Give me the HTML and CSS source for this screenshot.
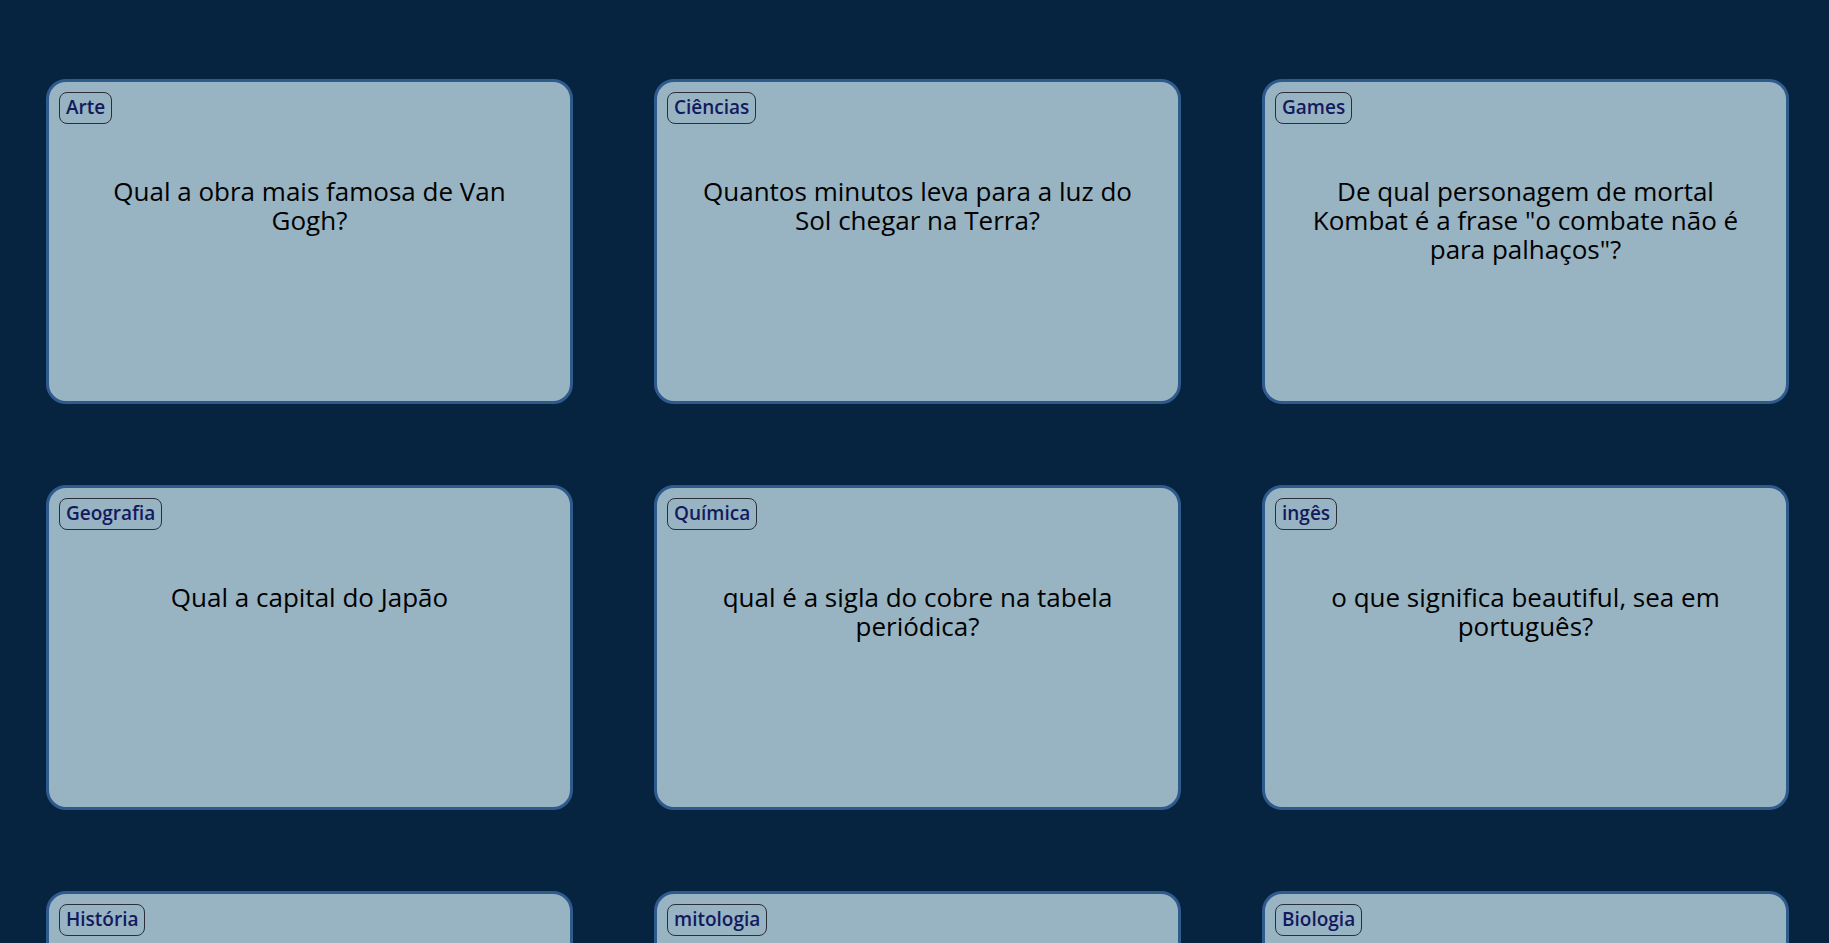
FILE: index.html
```html
<!DOCTYPE html>
<html lang="pt-BR">
<head>
<meta charset="utf-8">
<title>Perguntas</title>
<link rel="stylesheet" href="styles.css">
</head>
<body>
<main class="board">
  <article class="card">
    <span class="tag">Arte</span>
    <p class="question">Qual a obra mais famosa de Van Gogh?</p>
  </article>
  <article class="card">
    <span class="tag">Ciências</span>
    <p class="question">Quantos minutos leva para a luz do Sol chegar na Terra?</p>
  </article>
  <article class="card">
    <span class="tag">Games</span>
    <p class="question">De qual personagem de mortal Kombat é a frase "o combate não é para palhaços"?</p>
  </article>
  <article class="card">
    <span class="tag">Geografia</span>
    <p class="question">Qual a capital do Japão</p>
  </article>
  <article class="card">
    <span class="tag">Química</span>
    <p class="question">qual é a sigla do cobre na tabela periódica?</p>
  </article>
  <article class="card">
    <span class="tag">ingês</span>
    <p class="question">o que significa beautiful, sea em português?</p>
  </article>
  <article class="card">
    <span class="tag">História</span>
    <p class="question">Quem foi o primeiro presidente do Brasil?</p>
  </article>
  <article class="card">
    <span class="tag">mitologia</span>
    <p class="question">Quem é o deus do trovão na mitologia nórdica?</p>
  </article>
  <article class="card">
    <span class="tag">Biologia</span>
    <p class="question">Qual é a maior célula do corpo humano?</p>
  </article>
</main>
</body>
</html>
```

FILE: styles.css
```css
html, body {
  margin: 0;
  padding: 0;
  background: #062340;
}

body {
  font-family: "Open Sans", "Noto Sans", sans-serif;
  color: #000;
}

.board {
  display: grid;
  grid-template-columns: repeat(3, 527px);
  column-gap: 81px;
  row-gap: 81px;
  padding: 79px 40px 80px 46px;
}

.card {
  height: 325px;
  box-sizing: border-box;
  background: #98b3c2;
  border: 3px solid #2e5a8c;
  border-radius: 20px;
  padding: 10px;
  display: flex;
  flex-direction: column;
  align-items: flex-start;
}

.tag {
  display: inline-block;
  box-sizing: border-box;
  height: 32px;
  line-height: 29px;
  padding: 0 6px;
  border: 1px solid #2b2f3a;
  border-radius: 8px;
  color: #121a5e;
  font-size: 19px;
  font-weight: 600;
}

.question {
  align-self: stretch;
  margin: 53px 28px 0;
  text-align: center;
  font-size: 26px;
  line-height: 29px;
}
```
